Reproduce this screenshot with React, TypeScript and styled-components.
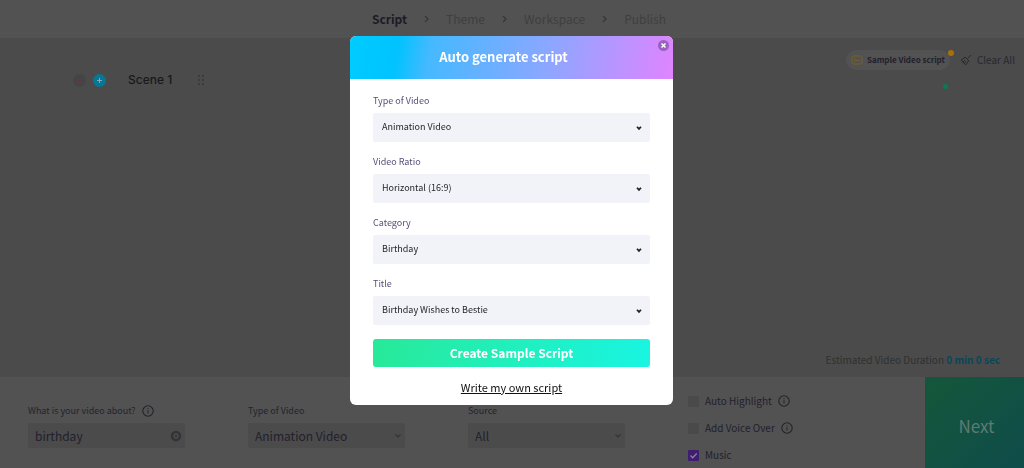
import React from "react";
import styled, { createGlobalStyle } from "styled-components";

const GlobalStyle = createGlobalStyle`
  *, *::before, *::after { box-sizing: border-box; }
  body {
    margin: 0;
    background: #515151;
    color: #26242f;
    font-family: "Noto Sans CJK SC", "Open Sans", sans-serif;
    overflow: hidden;
  }
  button, input, select { font: inherit; color: inherit; }
`;

const Page = styled.div`
  min-height: 100vh;
  display: flex;
  flex-direction: column;
`;

const Stepper = styled.nav`
  height: 38px;
  display: flex;
  align-items: center;
  justify-content: center;
  gap: 17px;
  padding-left: 14px;
  background: #525252;
  color: #3f3f3f;
`;

const Step = styled.a<{ $active?: boolean }>`
  font-size: 12px;
  line-height: 16px;
  font-weight: ${(p) => (p.$active ? 700 : 400)};
  color: ${(p) => (p.$active ? "#1d1b27" : "#3f3f3f")};
  text-decoration: none;
`;

const Workspace = styled.main`
  flex: 1;
  display: flex;
  flex-direction: column;
  justify-content: space-between;
  background: #4b4b4b;
`;

const SceneBar = styled.div`
  display: flex;
  justify-content: space-between;
  padding: 12px 9px 0 73px;
`;

const SceneTools = styled.div`
  display: flex;
  align-items: center;
  gap: 7px;
  padding-top: 20px;
  height: 40px;
`;

const RoundButton = styled.button<{ $primary?: boolean }>`
  width: 13px;
  height: 13px;
  padding: 0;
  border: 0;
  border-radius: 50%;
  display: grid;
  place-items: center;
  background: ${(p) => (p.$primary ? "#047896" : "#454545")};
  color: ${(p) => (p.$primary ? "#8fa6ad" : "#6b3343")};
`;

const SceneName = styled.h2`
  margin: 0 18px 0 15px;
  font: 500 12px/16px Inter, sans-serif;
  color: #19191b;
`;

const Actions = styled.div`
  display: flex;
  align-items: flex-start;
  gap: 10px;
  height: 20px;
`;

const PillButton = styled.button`
  position: relative;
  display: flex;
  align-items: center;
  gap: 4px;
  height: 20px;
  padding: 0 5px;
  border: 0;
  border-radius: 10px;
  background: #525252;
  color: #22202c;
  font-size: 8px;
  line-height: 12px;
  font-weight: 700;
  white-space: nowrap;
`;

const Dot = styled.span`
  position: absolute;
  top: 0;
  right: -4px;
  width: 6px;
  height: 6px;
  border-radius: 50%;
  background: #a8700a;
`;

const CursorDot = styled.span`
  position: absolute;
  top: 34px;
  right: 2px;
  width: 5px;
  height: 5px;
  border-radius: 50%;
  background: #087a58;
`;

const PlainButton = styled.button`
  display: flex;
  align-items: center;
  gap: 5px;
  height: 20px;
  padding: 0;
  border: 0;
  background: none;
  color: #292832;
  font-size: 10px;
  line-height: 12px;
  white-space: nowrap;
`;

const Duration = styled.p`
  margin: 0;
  padding: 0 24px 10px;
  text-align: right;
  font-size: 10px;
  line-height: 14px;
  color: #303030;
  strong { color: #08475a; font-weight: 700; }
`;

const Settings = styled.footer`
  display: flex;
  height: 91px;
  background: #525252;
`;

const Fields = styled.div`
  flex: 1;
  display: grid;
  grid-template-columns: repeat(3, minmax(0, 157px)) 1fr;
  column-gap: 63px;
  padding: 16px 0 0 28px;
`;

const Field = styled.div`
  padding-top: 10px;
`;

const FieldLabel = styled.label`
  display: flex;
  align-items: center;
  gap: 6px;
  height: 16px;
  margin-bottom: 4px;
  font-size: 9px;
  line-height: 16px;
  color: #24222e;
  white-space: nowrap;
`;

const ControlWrap = styled.div`
  position: relative;
  color: #24222e;
  svg {
    position: absolute;
    top: 50%;
    right: 3px;
    transform: translateY(-50%);
    pointer-events: none;
  }
`;

const darkControl = `
  display: block;
  width: 100%;
  height: 25px;
  padding: 0 7px;
  border: 0;
  border-radius: 2px;
  background: #4b4b4b;
  color: #22202c;
  font-size: 12px;
  line-height: 16px;
  appearance: none;
  outline: 0;
`;
const DarkInput = styled.input`${darkControl}`;
const DarkSelect = styled.select`${darkControl}`;

const Options = styled.div`
  display: flex;
  flex-direction: column;
  gap: 11px;
`;

const Option = styled.label`
  display: flex;
  align-items: center;
  height: 16px;
  gap: 6px;
  font-size: 10px;
  line-height: 16px;
  white-space: nowrap;
  color: #22202c;
`;

const Check = styled.input`
  appearance: none;
  width: 11px;
  height: 11px;
  margin: 0;
  border-radius: 1px;
  background: #4a4a4a;
  &:checked {
    background: #3f1d70 url("data:image/svg+xml,%3Csvg xmlns='http://www.w3.org/2000/svg' viewBox='0 0 11 11'%3E%3Cpath d='M2.5 5.5l2.2 2.2 4-4.2' fill='none' stroke='%238a8298' stroke-width='1.4'/%3E%3C/svg%3E");
  }
`;

const NextButton = styled.button`
  flex: 0 0 99px;
  padding: 6px 0 0 4px;
  border: 0;
  background: linear-gradient(135deg, #15573a, #0f4c4b);
  color: #5f7a72;
  font-size: 17px;
  line-height: 22px;
`;

const Overlay = styled.div`
  position: fixed;
  inset: 0;
  display: flex;
  align-items: flex-start;
  justify-content: center;
  padding: 36px 1px 0 0;
`;

const Dialog = styled.section`
  position: relative;
  width: 323px;
  max-width: 100%;
  border-radius: 6px;
  overflow: hidden;
  background: #fff;
`;

const DialogTitle = styled.h1`
  margin: 0;
  padding: 11px 32px 12px 16px;
  text-align: center;
  font-size: 13px;
  line-height: 20px;
  font-weight: 700;
  color: #fff;
  background: linear-gradient(100deg, #00ccff 0%, #00c3ff 15%, #45b9ff 25%, #8ea6ff 62%, #e084ff 100%);
`;

const CloseButton = styled.button`
  position: absolute;
  top: 4px;
  right: 4px;
  width: 11px;
  height: 11px;
  display: grid;
  place-items: center;
  padding: 0;
  border: 0;
  border-radius: 50%;
  background: #9962bd;
  color: #fff;
`;

const Form = styled.form`
  display: flex;
  flex-direction: column;
  padding: 14px 23px 9px;
`;

const FormField = styled.div`
  margin-bottom: 12px;
  &:last-of-type { margin-bottom: 14px; }
`;

const FormLabel = styled.label`
  display: block;
  padding-bottom: 4px;
  font-size: 9px;
  line-height: 16px;
  color: #57507a;
`;

const SelectWrap = styled.div`
  position: relative;
  svg {
    position: absolute;
    top: 12px;
    right: 8px;
    pointer-events: none;
  }
`;

const Select = styled.select`
  display: block;
  width: 100%;
  height: 29px;
  padding: 0 9px 2px;
  border: 0;
  border-radius: 2px;
  background: #f2f3f9;
  color: #25252b;
  font-size: 9px;
  line-height: 16px;
  appearance: none;
`;

const CreateButton = styled.button`
  height: 28px;
  border: 0;
  border-radius: 3px;
  background: linear-gradient(100deg, #28e998, #19f5e2);
  color: #fff;
  font-size: 12px;
  line-height: 16px;
  font-weight: 700;
`;

const OwnLink = styled.a`
  align-self: center;
  margin-top: 12px;
  padding-bottom: 1px;
  font-size: 11px;
  line-height: 16px;
  color: #111;
  text-decoration: underline;
`;

const Chevron = ({ right = false }: { right?: boolean }) => (
  <svg width={right ? 5 : 8} height={right ? 8 : 6} viewBox={right ? "0 0 5 8" : "0 0 8 6"} fill="none" stroke={right ? "#363636" : "#333338"} strokeWidth="1.2" aria-hidden="true">
    <path d={right ? "M1 1l3 3-3 3" : "M1.5 1.5L4 4l2.500-2.500"} />
  </svg>
);

const SelectArrow = () => (
  <svg width="6" height="6" viewBox="0 0 6 6" aria-hidden="true">
    <path d="M1 1.700L3 3.900 5 1.700" fill="none" stroke="#222" strokeWidth="1.700" />
  </svg>
);

const InfoIcon = () => (
  <svg width="12" height="12" viewBox="0 0 12 12" fill="none" stroke="#24232c" aria-hidden="true">
    <circle cx="6" cy="6" r="5.200" strokeWidth="1.100" />
    <path d="M6 5.200v3.300M6 3.200v1" />
  </svg>
);

const ClearIcon = () => (
  <svg width="12" height="12" viewBox="0 0 12 12" fill="none" aria-hidden="true">
    <circle cx="6" cy="6" r="4" stroke="#333338" strokeWidth="2.600" />
    <path d="M5 5l2 2M7 5L5 7" stroke="#333338" />
  </svg>
);

const ScriptIcon = () => (
  <svg width="12" height="10" viewBox="0 0 12 10" fill="none" stroke="#75602a" aria-hidden="true">
    <rect x="1" y="1" width="10" height="8" rx="1.500" />
    <path d="M3 5.500h6M3 3.500h1.500" />
  </svg>
);

const BroomIcon = () => (
  <svg width="12" height="12" viewBox="0 0 12 12" fill="none" stroke="currentColor" strokeLinejoin="round" aria-hidden="true">
    <path d="M11 1L7.700 4.300M5.300 3.200l3.500 3.500M5.300 3.200L1 6.200l4.700 4.700 3.100-4.200M3 7.800l2-1.500M4.400 9.300l1.700-2" />
  </svg>
);

const GripIcon = () => (
  <svg width="8" height="12" viewBox="0 0 8 12" fill="#353535" aria-hidden="true">
    {[2, 6, 10].map((y) => (
      <React.Fragment key={y}>
        <circle cx="2" cy={y} r="0.900" />
        <circle cx="6" cy={y} r="0.900" />
      </React.Fragment>
    ))}
  </svg>
);

const steps = ["Script", "Theme", "Workspace", "Publish"];

const formFields = [
  { id: "video-type", label: "Type of Video", value: "Animation Video" },
  { id: "video-ratio", label: "Video Ratio", value: "Horizontal (16:9)" },
  { id: "category", label: "Category", value: "Birthday" },
  { id: "title", label: "Title", value: "Birthday Wishes to Bestie" },
];

export default function App() {
  return (
    <>
      <GlobalStyle />
      <Page>
        <Stepper>
          {steps.map((step, i) => (
            <React.Fragment key={step}>
              {i > 0 && <Chevron right />}
              <Step href="#" $active={i === 0}>{step}</Step>
            </React.Fragment>
          ))}
        </Stepper>

        <Workspace>
          <SceneBar>
            <SceneTools>
              <RoundButton aria-label="Remove scene">
                <svg width="7" height="7" viewBox="0 0 7 7" stroke="currentColor"><path d="M1.500 3.500h4" /></svg>
              </RoundButton>
              <RoundButton $primary aria-label="Add scene">
                <svg width="7" height="7" viewBox="0 0 7 7" stroke="currentColor"><path d="M1 3.500h5M3.500 1v5" /></svg>
              </RoundButton>
              <SceneName>Scene 1</SceneName>
              <GripIcon />
            </SceneTools>
            <Actions>
              <PillButton>
                <ScriptIcon />
                Sample Video script
                <Dot />
                <CursorDot />
              </PillButton>
              <PlainButton>
                <BroomIcon />
                Clear All
              </PlainButton>
            </Actions>
          </SceneBar>
          <Duration>Estimated Video Duration <strong>0 min 0 sec</strong></Duration>
        </Workspace>

        <Settings>
          <Fields>
            <Field>
              <FieldLabel htmlFor="about">What is your video about? <InfoIcon /></FieldLabel>
              <ControlWrap>
                <DarkInput id="about" defaultValue="birthday" />
                <ClearIcon />
              </ControlWrap>
            </Field>
            <Field>
              <FieldLabel htmlFor="type">Type of Video</FieldLabel>
              <ControlWrap>
                <DarkSelect id="type"><option>Animation Video</option></DarkSelect>
                <Chevron />
              </ControlWrap>
            </Field>
            <Field>
              <FieldLabel htmlFor="source">Source</FieldLabel>
              <ControlWrap>
                <DarkSelect id="source"><option>All</option></DarkSelect>
                <Chevron />
              </ControlWrap>
            </Field>
            <Options>
              <Option><Check type="checkbox" />Auto Highlight<InfoIcon /></Option>
              <Option><Check type="checkbox" />Add Voice Over<InfoIcon /></Option>
              <Option><Check type="checkbox" defaultChecked />Music</Option>
            </Options>
          </Fields>
          <NextButton>Next</NextButton>
        </Settings>
      </Page>

      <Overlay>
        <Dialog role="dialog" aria-modal="true" aria-labelledby="dialog-title">
          <DialogTitle id="dialog-title">Auto generate script</DialogTitle>
          <CloseButton aria-label="Close">
            <svg width="5" height="5" viewBox="0 0 5 5" stroke="currentColor" strokeWidth="1.500"><path d="M.5.5l4 4M4.500.5l-4 4" /></svg>
          </CloseButton>
          <Form>
            {formFields.map((f) => (
              <FormField key={f.id}>
                <FormLabel htmlFor={f.id}>{f.label}</FormLabel>
                <SelectWrap>
                  <Select id={f.id}><option>{f.value}</option></Select>
                  <SelectArrow />
                </SelectWrap>
              </FormField>
            ))}
            <CreateButton type="button">Create Sample Script</CreateButton>
            <OwnLink href="#">Write my own script</OwnLink>
          </Form>
        </Dialog>
      </Overlay>
    </>
  );
}
